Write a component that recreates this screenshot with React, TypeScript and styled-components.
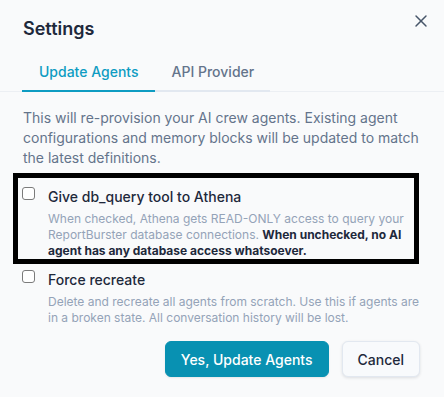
import React from "react";
import styled, { createGlobalStyle } from "styled-components";
import { X } from "lucide-react";

const Global = createGlobalStyle`
  html, body { margin: 0; padding: 0; background: #f9fafb; }
  body { font-family: Inter, "Noto Sans", "Liberation Sans", sans-serif; -webkit-font-smoothing: antialiased; }
  * { box-sizing: border-box; }
`;

const Dialog = styled.div`
  width: 444px;
  min-height: 397px;
  background: #f9fafb;
  display: flex;
  flex-direction: column;
`;

const Header = styled.div`
  display: flex;
  align-items: flex-start;
  justify-content: space-between;
  padding: 15px 13px 0 23px;
`;

const Title = styled.h2`
  margin: 0;
  font-size: 18px;
  line-height: 28px;
  font-weight: 600;
  color: #1e293b;
`;

const CloseButton = styled.button`
  border: 0;
  background: transparent;
  padding: 0;
  width: 20px;
  height: 20px;
  margin-top: -4px;
  color: #475569;
  display: flex;
  align-items: center;
  justify-content: center;
  cursor: pointer;
`;

const TabBar = styled.div`
  border-bottom: 1px solid #eceff3;
  padding: 11px 23px 0 22px;
`;

const TabList = styled.div`
  display: inline-flex;
  border-bottom: 2px solid #e2e8f0;
  margin-bottom: -1px;
`;

const Tab = styled.button<{ $active?: boolean }>`
  border: 0;
  background: transparent;
  font-family: inherit;
  font-size: 14px;
  line-height: 20px;
  font-weight: 500;
  padding: 8px 16px 8px 17px;
  margin-bottom: -2px;
  color: ${(p) => (p.$active ? "#0e9cc2" : "#64748b")};
  border-bottom: 2px solid ${(p) => (p.$active ? "#0e9cc2" : "transparent")};
  cursor: pointer;
`;

const Body = styled.div`
  padding: 16px 24px 20px 23px;
  display: flex;
  flex-direction: column;
`;

const Intro = styled.p`
  margin: 0;
  font-size: 14px;
  line-height: 20px;
  color: #64748b;
`;

const Options = styled.div`
  margin-top: 19px;
  display: flex;
  flex-direction: column;
  gap: 11px;
`;

const Option = styled.label<{ $highlight?: boolean }>`
  position: relative;
  display: flex;
  align-items: flex-start;
  gap: 13px;
  &::after {
    content: "";
    display: ${(p) => (p.$highlight ? "block" : "none")};
    position: absolute;
    top: -14px;
    left: -10px;
    right: 1px;
    bottom: -5px;
    border: 5px solid #000;
    pointer-events: none;
  }
`;

const Check = styled.input.attrs({ type: "checkbox" })`
  appearance: none;
  -webkit-appearance: none;
  width: 13px;
  height: 13px;
  margin: 0;
  margin-left: -1px;
  flex: none;
  border: 1px solid #7b7b7b;
  border-radius: 3px;
  background: #fff;
`;

const OptionText = styled.div`
  display: flex;
  flex-direction: column;
  gap: 4px;
`;

const OptionLabel = styled.span`
  font-size: 14px;
  line-height: 20px;
  font-weight: 500;
  color: #1e293b;
`;

const OptionDesc = styled.span`
  font-size: 12px;
  line-height: 16px;
  color: #94a3b8;
  strong {
    color: #1e293b;
    font-weight: 700;
  }
`;

const Footer = styled.div`
  margin-top: 15px;
  display: flex;
  justify-content: flex-end;
  gap: 13px;
`;

const Button = styled.button<{ $primary?: boolean }>`
  height: 36px;
  padding: 0 15px;
  border-radius: 6px;
  font-family: inherit;
  font-size: 14px;
  font-weight: 500;
  cursor: pointer;
  border: 1px solid ${(p) => (p.$primary ? "#0891b2" : "#e2e8f0")};
  background: ${(p) => (p.$primary ? "#0891b2" : "#f8fafc")};
  color: ${(p) => (p.$primary ? "#ffffff" : "#1e293b")};
  box-shadow: ${(p) => (p.$primary ? "0 1px 2px rgba(0,0,0,0.08)" : "0 1px 3px rgba(15,23,42,0.12)")};
`;

export default function App() {
  return (
    <>
      <Global />
      <Dialog>
        <Header>
          <Title>Settings</Title>
          <CloseButton aria-label="Close">
            <X size={20} strokeWidth={1.75} />
          </CloseButton>
        </Header>
        <TabBar>
          <TabList>
            <Tab $active>Update Agents</Tab>
            <Tab>API Provider</Tab>
          </TabList>
        </TabBar>
        <Body>
          <Intro>
            This will re-provision your AI crew agents. Existing agent configurations and memory
            blocks will be updated to match the latest definitions.
          </Intro>
          <Options>
            <Option $highlight>
              <Check />
              <OptionText>
                <OptionLabel>Give db_query tool to Athena</OptionLabel>
                <OptionDesc>
                  When checked, Athena gets READ-ONLY access to query your ReportBurster database
                  connections. <strong>When unchecked, no AI agent has any database access whatsoever.</strong>
                </OptionDesc>
              </OptionText>
            </Option>
            <Option>
              <Check />
              <OptionText>
                <OptionLabel>Force recreate</OptionLabel>
                <OptionDesc>
                  Delete and recreate all agents from scratch. Use this if agents are in a broken
                  state. All conversation history will be lost.
                </OptionDesc>
              </OptionText>
            </Option>
          </Options>
          <Footer>
            <Button $primary>Yes, Update Agents</Button>
            <Button>Cancel</Button>
          </Footer>
        </Body>
      </Dialog>
    </>
  );
}
